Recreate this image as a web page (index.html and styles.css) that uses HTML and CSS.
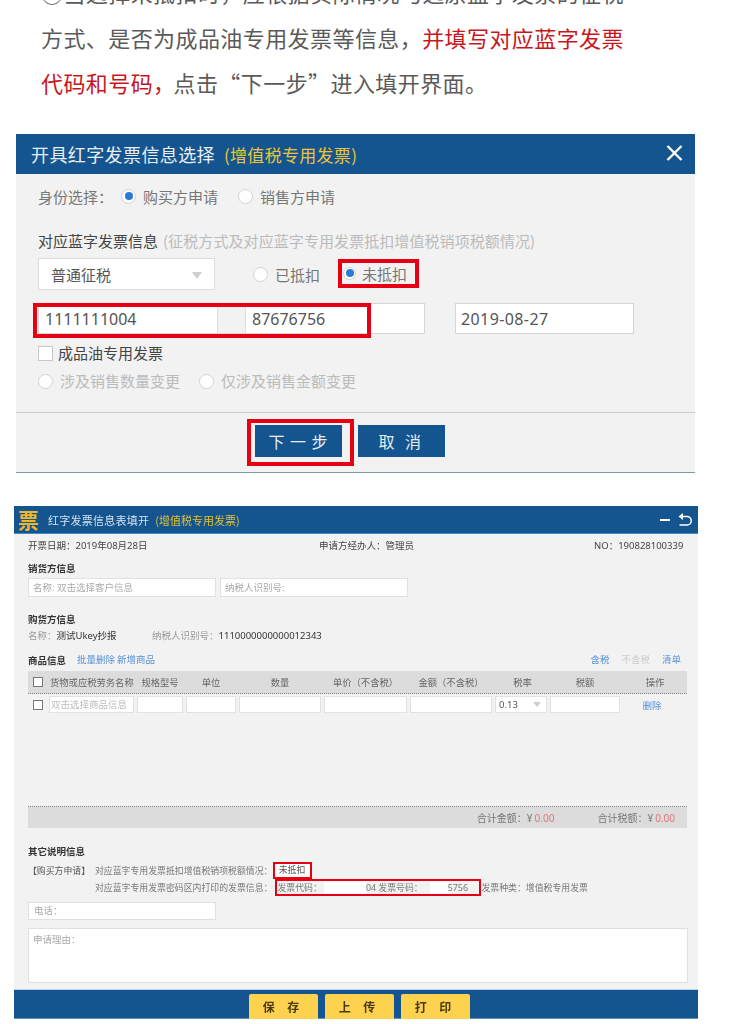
FILE: index.html
```html
<!DOCTYPE html>
<html lang="zh-CN">
<head>
<meta charset="utf-8">
<title>开具红字发票</title>
<link rel="stylesheet" href="styles.css">
</head>
<body>
<main class="page">
  <p class="intro">①当选择未抵扣时，应根据实际情况勾选原蓝字发票的征税方式、是否为成品油专用发票等信息，<strong>并填写对应蓝字发票代码和号码，</strong>点击“下一步”进入填开界面。</p>

  <section class="dlg">
    <header class="dlg-head">
      <h2 class="dlg-title">开具红字发票信息选择<span class="dlg-sub">(增值税专用发票)</span></h2>
      <svg class="dlg-close" width="17" height="16" viewBox="0 0 17 16"><path d="M1.5 1 15.5 15M15.5 1 1.5 15" fill="none" stroke="#fff" stroke-width="2.4"/></svg>
    </header>
    <div class="dlg-body">
      <div class="row row-id">
        <span class="lbl-id">身份选择：</span>
        <span class="radio on"></span><span class="opt opt-a">购买方申请</span>
        <span class="radio"></span><span class="opt">销售方申请</span>
      </div>
      <div class="row row-info">
        <span class="info-title">对应蓝字发票信息</span>
        <span class="info-hint">(征税方式及对应蓝字专用发票抵扣增值税销项税额情况)</span>
      </div>
      <div class="row row-select">
        <div class="select"><span>普通征税</span><i class="caret"></i></div>
        <span class="radio"></span><span class="opt opt-b">已抵扣</span>
        <div class="mark-opt"><span class="radio on small"></span><span class="opt">未抵扣</span></div>
      </div>
      <div class="row row-inputs">
        <div class="code-group">
          <span class="code-a">1111111004</span>
          <span class="code-gap"></span>
          <span class="code-b">87676756</span>
          <span class="mark mark-code"></span>
        </div>
        <div class="date-box">2019-08-27</div>
      </div>
      <div class="row row-check">
        <span class="check"></span><span class="check-label">成品油专用发票</span>
      </div>
      <div class="row row-change">
        <span class="radio"></span><span class="opt-dim opt-c">涉及销售数量变更</span>
        <span class="radio"></span><span class="opt-dim">仅涉及销售金额变更</span>
      </div>
    </div>
    <footer class="dlg-foot">
      <div class="btn-wrap"><button class="btn btn-next">下 一 步</button><span class="mark mark-next"></span></div>
      <button class="btn btn-cancel">取 消</button>
    </footer>
  </section>

  <section class="form">
    <header class="form-head">
      <span class="logo">票</span>
      <h2 class="form-title">红字发票信息表填开</h2>
      <span class="form-sub">(增值税专用发票)</span>
      <span class="form-min"></span>
      <svg class="form-back" width="15" height="14" viewBox="0 0 15 14"><path d="M5 3.5H10a4 4 0 0 1 0 8.5H2.500" fill="none" stroke="#fff" stroke-width="1.500"/><path d="M6 0v7L1.500 3.500z" fill="#fff"/></svg>
    </header>
    <div class="form-body">
      <div class="meta">
        <span class="meta-a">开票日期：2019年08月28日</span>
        <span class="meta-b">申请方经办人：管理员</span>
        <span>NO：190828100339</span>
      </div>
      <h3 class="sec sec-seller">销货方信息</h3>
      <div class="seller">
        <div class="fld">名称: 双击选择客户信息</div>
        <div class="fld">纳税人识别号:</div>
      </div>
      <h3 class="sec sec-buyer">购货方信息</h3>
      <div class="buyer">
        <span class="buyer-name"><em>名称：</em>测试Ukey抄报</span>
        <span><em>纳税人识别号：</em>1110000000000012343</span>
      </div>
      <div class="goods-bar">
        <h3 class="sec">商品信息</h3>
        <a class="lnk lnk-first">批量删除</a>
        <a class="lnk">新增商品</a>
        <a class="lnk lnk-tax">含税</a>
        <span class="lnk-off">不含税</span>
        <a class="lnk">清单</a>
      </div>
      <div class="grid grid-head">
        <span class="check small"></span>
        <span class="h-left">货物或应税劳务名称</span>
        <span>规格型号</span>
        <span>单位</span>
        <span>数量</span>
        <span>单价（不含税）</span>
        <span>金额（不含税）</span>
        <span>税率</span>
        <span>税额</span>
        <span>操作</span>
      </div>
      <div class="grid grid-row">
        <span class="check small"></span>
        <div class="cell cell-hint">双击选择商品信息</div>
        <div class="cell"></div>
        <div class="cell"></div>
        <div class="cell"></div>
        <div class="cell"></div>
        <div class="cell"></div>
        <div class="cell cell-rate">0.13<i class="caret tiny"></i></div>
        <div class="cell cell-last"></div>
        <a class="lnk lnk-del">删除</a>
      </div>
      <div class="total">
        <span class="total-a">合计金额：¥<b>0.00</b></span>
        <span>合计税额：¥<b>0.00</b></span>
      </div>
      <h3 class="sec sec-other">其它说明信息</h3>
      <div class="note">
        <span class="note-tag">【购买方申请】</span>
        <span class="note-text">对应蓝字专用发票抵扣增值税销项税额情况：</span>
        <span class="note-mark">未抵扣</span>
      </div>
      <div class="note note-second">
        <span class="note-text note-indent">对应蓝字专用发票密码区内打印的发票信息：</span>
        <span class="note-box">发票代码：<i class="wipe wipe-a"></i>04 发票号码：<i class="wipe wipe-b"></i>5756</span>
        <span class="note-kind">发票种类：增值税专用发票</span>
      </div>
      <div class="fld fld-phone">电话：</div>
      <div class="fld fld-reason">申请理由：</div>
    </div>
    <footer class="form-foot">
      <button class="y-btn">保 存</button>
      <button class="y-btn">上 传</button>
      <button class="y-btn">打 印</button>
    </footer>
  </section>
</main>
</body>
</html>
```
FILE: styles.css
```css
* { box-sizing: border-box; }
html, body { margin: 0; padding: 0; background: #fff; overflow: hidden; }
body { height: 1024px; font-family: "Noto Sans", "Noto Sans CJK SC", sans-serif; color: #555; }
h2, h3, p { margin: 0; font-weight: normal; }
em, i { font-style: normal; }
button { font-family: inherit; border: 0; padding: 0; }
.page { width: 750px; }

.intro { width: 600px; margin: -30px 0 0 41px; padding-bottom: 1px; font-size: 22px; letter-spacing: .42px; line-height: 45px; color: #5a5a5a; font-family: "Noto Sans CJK SC", sans-serif; }
.intro strong { font-weight: normal; color: #c8161d; margin-right: -2px; }

/* first dialog */
.dlg { width: 679px; margin: 28px 0 0 16px; background: #f2f2f2; border-bottom: 1px solid #7b9ea3; }
.dlg-head { height: 40px; background: #15558f; display: flex; align-items: center; justify-content: space-between; padding: 0 12px 0 15px; }
.dlg-title { font-size: 18px; letter-spacing: .4px; color: #e8eef4; line-height: 38px; font-family: "Noto Sans CJK SC", sans-serif; }
.dlg-sub { margin-left: 9px; font-size: 17px; letter-spacing: .3px; color: #eec536; }
.dlg-close { margin-top: -2px; }
.dlg-body { height: 238px; padding: 12px 0 0 22px; font-size: 15px; }
.row { display: flex; align-items: center; font-family: "Noto Sans CJK SC", sans-serif; }
.row-id { height: 20px; }
.lbl-id { width: 83px; color: #777; }
.radio { width: 15px; height: 15px; flex: none; border: 1px solid #d3d3d3; border-radius: 50%; background: #fff; display: inline-block; position: relative; }
.radio.on::after { content: ""; position: absolute; left: 2.500px; top: 2.500px; width: 8px; height: 8px; border-radius: 50%; background: #2a7ad8; }
.radio.small { width: 13px; height: 13px; }
.radio.small::after { left: 1.500px; top: 1.500px; }
.opt { margin-left: 7px; color: #777; white-space: nowrap; }
.opt-a { margin-right: 20px; }
.opt-b { margin-right: 18px; }
.row-info { height: 20px; margin-top: 24px; white-space: nowrap; }
.info-title { color: #444; }
.info-hint { margin-left: 5px; color: #bbb; letter-spacing: .08px; }
.row-select { height: 32px; margin-top: 8px; }
.select { width: 177px; height: 32px; margin-right: 38px; border: 1px solid #ddd; background: #fff; padding-left: 12px; display: flex; align-items: center; justify-content: space-between; padding-right: 12px; color: #555; }
.caret { width: 0; height: 0; border: 5.500px solid transparent; border-top: 7px solid #cfcfcf; border-bottom: 0; margin-top: 2px; }
.caret.tiny { border-width: 4px; border-top-width: 5px; border-bottom: 0; margin-top: 0; }
.mark-opt { width: 81px; height: 29px; margin-top: -2px; display: flex; align-items: center; border: 4px solid #e60012; padding-left: 1px; }
.mark-opt .opt { margin-left: 6px; }
.row-inputs { height: 31px; margin-top: 13px; }
.code-group { position: relative; width: 387px; height: 31px; margin-right: 30px; display: flex; background: #fff; border: 1px solid #d5d5d5; font-size: 16px; color: #555; font-family: "Noto Sans", sans-serif; }
.code-a { width: 178px; padding: 3px 0 0 6px; line-height: 24px; }
.code-gap { width: 29px; background: #f2f2f2; border-left: 1px solid #ddd; border-right: 1px solid #ddd; }
.code-b { padding: 3px 0 0 6px; line-height: 24px; }
.date-box { width: 179px; height: 31px; background: #fff; border: 1px solid #d5d5d5; padding-left: 5px; font-size: 16px; letter-spacing: .4px; line-height: 30px; color: #555; font-family: "Noto Sans", sans-serif; }
.mark { position: absolute; border: 4px solid #e60012; pointer-events: none; }
.mark-code { left: -6px; top: -1px; width: 338px; height: 35px; }
.row-check { height: 16px; margin-top: 11px; }
.check { width: 15px; height: 15px; flex: none; background: #fff; border: 1px solid #c8c8c8; display: inline-block; }
.check.small { width: 10px; height: 10px; border-color: #777; }
.check-label { margin: -2px 0 0 5px; color: #444; }
.row-change { height: 16px; margin-top: 12px; }
.opt-dim { margin: -2px 0 0 7px; color: #bbb; white-space: nowrap; }
.opt-dim.opt-c { margin-right: 19px; }
.dlg-foot { height: 60px; border-top: 1px solid #ccc; padding: 12px 0 0 239px; display: flex; align-items: flex-start; gap: 16px; }
.btn-wrap { position: relative; width: 87px; height: 32px; }
.btn { width: 87px; height: 32px; background: #15558f; color: #e9eef3; font-size: 16px; font-family: "Noto Sans CJK SC", sans-serif; }
.btn-next { letter-spacing: 1px; }
.btn-cancel { letter-spacing: 3.500px; }
.mark-next { left: -8px; top: -6px; width: 107px; height: 47px; }

/* second form */
.form { width: 684px; margin: 33px 0 0 14px; background: #f2f2f2; font-size: 9.500px; font-family: "Noto Sans", "Noto Sans CJK SC", sans-serif; color: #555; filter: blur(.35px); }
.form-head { height: 28px; background: #15558f; border-bottom: 1px solid #3d8ac7; display: flex; align-items: center; padding: 0 6px 0 3px; }
.logo { width: 23px; margin-top: -2px; font-size: 21px; line-height: 24px; font-weight: 700; color: #f0b52a; font-family: "Noto Sans CJK SC", sans-serif; text-align: center; }
.form-title { margin-left: 8px; font-size: 11px; color: #d5e3ef; letter-spacing: .25px; font-family: "Noto Sans CJK SC", sans-serif; }
.form-sub { margin-left: 6px; font-size: 11px; color: #e3c233; white-space: nowrap; font-family: "Noto Sans CJK SC", sans-serif; }
.form-min { width: 10px; height: 2px; background: #fff; margin-left: auto; }
.form-back { margin-left: 7px; }
.form-body { padding: 5px 11px 6px 14px; }
.meta { height: 14px; display: flex; line-height: 14px; color: #444; white-space: nowrap; }
.meta-a { width: 291px; }
.meta-b { width: 275px; }
.sec { font-size: 9.500px; line-height: 14px; font-weight: 700; color: #333; white-space: nowrap; font-family: "Noto Sans CJK SC", sans-serif; }
.sec-seller { margin-top: 8px; }
.seller { display: flex; gap: 4px; margin-top: 3px; }
.fld { width: 188px; height: 19px; background: #fff; border: 1px solid #e0e0e0; padding-left: 4px; line-height: 17px; color: #aaa; }
.sec-buyer { margin-top: 15px; }
.buyer { height: 14px; margin-top: 3px; display: flex; line-height: 14px; color: #333; white-space: nowrap; }
.buyer em { color: #999; }
.buyer-name { width: 124px; }
.goods-bar { height: 14px; margin-top: 10px; padding-right: 4px; display: flex; align-items: center; line-height: 14px; white-space: nowrap; }
.lnk { color: #5b93d8; margin-right: 2px; }
.lnk-first { margin-left: 11px; }
.lnk-tax { margin-left: auto; margin-right: 12px; }
.lnk-off { color: #ccc; margin-right: 12px; }
.grid { display: grid; grid-template-columns: 21px 88px 49px 53px 85px 86px 85px 55px 70px 67px; align-items: center; }
.grid-head { height: 23px; margin-top: 4px; background: #dcdcdc; border-bottom: 1px dotted #888; color: #666; text-align: center; white-space: nowrap; font-size: 9.300px; }
.grid-head > span { padding-right: 3px; }
.grid-head > span:nth-child(n+8) { padding-right: 0; }
.grid-head > span:last-child { padding-left: 3px; }
.grid-head > .check { padding: 0; margin-left: 5px; }
.h-left { text-align: left; padding-left: 1px; }
.grid-row { height: 17px; margin-top: 2px; color: #bbb; }
.grid-row > .check { margin-left: 5px; }
.cell { height: 17px; margin-right: 3px; background: #fff; border: 1px solid #e2e2e2; line-height: 15px; padding-left: 1px; white-space: nowrap; overflow: hidden; }
.cell-last { margin-right: 0; }
.cell-rate { display: flex; align-items: center; justify-content: space-between; color: #555; padding: 0 5px 0 3px; }
.lnk-del { text-align: center; margin: 0; padding-right: 3px; }
.total { height: 22px; margin-top: 93px; background: #dcdcdc; border-top: 1px dotted #888; display: flex; justify-content: flex-end; align-items: center; padding-right: 12px; color: #777; white-space: nowrap; font-size: 10px; }
.total b { font-weight: normal; color: #e0787c; margin-left: 2px; }
.total-a { margin-right: 43px; }
.sec-other { margin-top: 16px; }
.note { height: 17px; margin-top: 4px; display: flex; align-items: center; white-space: nowrap; color: #777; font-size: 8.900px; }
.note-second { margin-top: 0; }
.note-tag { width: 67px; color: #555; }
.note-indent { margin-left: 67px; }
.note-mark { margin-left: 0; width: 39px; height: 17px; border: 2.500px solid #e60012; background: #fff; color: #555; line-height: 12px; text-align: center; }
.note-box { width: 206px; height: 17px; margin-left: 2px; border: 2.500px solid #e60012; line-height: 12px; display: flex; align-items: center; padding-left: 1px; }
.wipe { background: #fff; height: 12px; display: inline-block; flex: none; }
.wipe-a { width: 42px; margin-left: 2px; }
.wipe-b { width: 18px; margin-left: 7px; }
.note-kind { margin-left: 1px; }
.fld-phone { height: 18px; margin-top: 6px; line-height: 16px; padding-left: 5px; }
.fld-reason { width: 660px; height: 55px; margin-top: 8px; padding: 4px 0 0 4px; line-height: 14px; }
.form-foot { height: 30px; background: #15558f; border-top: 1px solid #b7d4e8; border-bottom: 1px solid #5a97a8; padding: 4px 0 0 235px; display: flex; gap: 7px; }
.y-btn { width: 69px; height: 25px; background: #fcd24f; border-radius: 2px 2px 0 0; color: #4a3a10; font-size: 12px; font-weight: 700; letter-spacing: 5px; font-family: "Noto Sans CJK SC", sans-serif; }
```
